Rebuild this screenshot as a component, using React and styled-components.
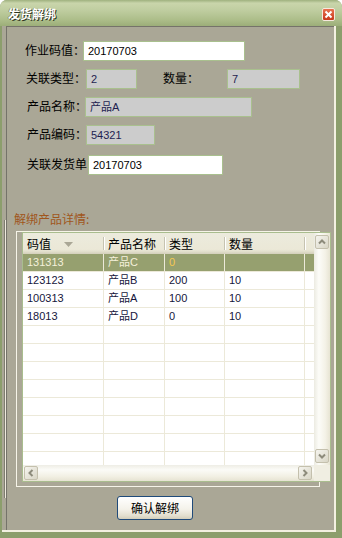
import React from "react";
import styled, { createGlobalStyle } from "styled-components";

const CJK = `"Noto Sans CJK SC", "Liberation Sans", sans-serif`;
const UI = `"Liberation Sans", "Noto Sans CJK SC", sans-serif`;

const Global = createGlobalStyle`
  html, body { margin: 0; padding: 0; background: #ffffff; }
  #root { width: 342px; height: 538px; }
  * { box-sizing: border-box; }
`;

const Window = styled.div`
  width: 342px;
  height: 538px;
  background: #8c9e6c;
  border-radius: 7px 7px 0 0;
  display: flex;
  flex-direction: column;
  overflow: hidden;
`;

const TitleBar = styled.div`
  height: 26px;
  flex: none;
  display: flex;
  align-items: center;
  padding: 2px 7px 0 8px;
  background: linear-gradient(
    to bottom,
    #9fb17e 0%,
    #c9d5ab 12%,
    #bfcda0 40%,
    #adbe8a 75%,
    #9cae79 100%
  );
`;

const Title = styled.div`
  font: 700 12px/14px ${CJK};
  color: #ffffff;
  text-shadow: 1px 1px 0 #2c3420, -1px 0 0 rgba(40, 50, 30, 0.35);
`;

const CloseBtn = styled.div`
  margin-left: auto;
  width: 13px;
  height: 13px;
  border: 1px solid #f6e8de;
  border-radius: 2px;
  background: linear-gradient(to bottom, #e8714f, #c8381b);
  display: flex;
  align-items: center;
  justify-content: center;
`;

const Frame = styled.div`
  flex: 1;
  margin: 0 6px 6px 2px;
  background: #aaa796;
  border-right: 2px solid #f3f0e1;
  border-bottom: 2px solid #f3f0e1;
  display: flex;
`;

const Gutter = styled.div`
  width: 4px;
  flex: none;
`;

const GroupEdge = styled.div`
  margin: 194px 0 0 2px;
  width: 2px;
  height: 278px;
  border-left: 1px solid #7f7d70;
  border-right: 1px solid #eeebdc;
`;

const Client = styled.div`
  flex: 1;
  border-left: 1px solid #75736a;
  border-top: 1px solid #75736a;
  display: flex;
  flex-direction: column;
  padding-top: 14px;
`;

const FieldRow = styled.div`
  display: flex;
  align-items: center;
  height: 20px;
  padding-left: ${(p) => p.$pl}px;
  margin-top: ${(p) => p.$mt || 0}px;
`;

const Label = styled.div`
  width: ${(p) => p.$w}px;
  margin-left: ${(p) => p.$ml || 0}px;
  flex: none;
  font: 12px/14px ${CJK};
  color: #000000;
  padding-bottom: 2px;
  white-space: nowrap;
`;

const TextBox = styled.div`
  width: ${(p) => p.$w}px;
  height: 20px;
  flex: none;
  border: 1px solid #a9c08e;
  background: ${(p) => (p.$ro ? "#cccccc" : "#ffffff")};
  font: 11px/18px ${UI};
  color: ${(p) => (p.$ro ? "#1e1e50" : "#000000")};
  padding-left: 4px;
  display: flex;
  align-items: center;
  white-space: nowrap;
`;

const GroupTitle = styled.div`
  margin-top: 37px;
  padding-left: 7px;
  height: 14px;
  font: 12px/14px ${CJK};
  color: #a0561c;
`;

const GridFrame = styled.div`
  margin: 5px 0 0 9px;
  width: 304px;
  height: 256px;
  border: 1px solid #f6f4e8;
  padding-left: 5px;
`;

const Grid = styled.div`
  width: 309px;
  height: 250px;
  border: 1px solid #a9bd8e;
  background: #ffffff;
  display: flex;
  flex-direction: column;
`;

const GridMain = styled.div`
  height: 232px;
  display: flex;
  flex: none;
`;

const GridTable = styled.div`
  width: 291px;
  height: 232px;
  overflow: hidden;
  flex: none;
`;

const COLS = "81px 61px 60px 80px 9px";

const HeaderRow = styled.div`
  display: grid;
  grid-template-columns: ${COLS};
  height: 21px;
  background: linear-gradient(
    to bottom,
    #ecebdd 0%,
    #ebe8d7 78%,
    #e2dfcc 88%,
    #d3cfba 100%
  );
`;

const HeaderCell = styled.div`
  position: relative;
  display: flex;
  align-items: center;
  padding-left: 4px;
  font: 12px/20px ${CJK};
  color: #000000;
  white-space: nowrap;
  &::after {
    content: "";
    display: ${(p) => (p.$sep ? "block" : "none")};
    position: absolute;
    right: 0;
    top: 4px;
    width: 1px;
    height: 13px;
    background: #c6c3b1;
    box-shadow: 1px 0 0 #ffffff;
  }
`;

const SortArrow = styled.svg`
  margin-left: 13px;
  margin-top: 1px;
`;

const DataRow = styled.div`
  display: grid;
  grid-template-columns: ${COLS};
  height: 18px;
  border-bottom: 1px solid #ece9d9;
  background: ${(p) => (p.$sel ? "#96a06f" : "#ffffff")};
`;

const Cell = styled.div`
  padding-left: 4px;
  border-right: ${(p) => (p.$last ? "none" : "1px solid #ece9d9")};
  font: 11px/17px ${UI};
  color: ${(p) => (p.$hl ? "#f5c94f" : p.$sel ? "#f4f0da" : "#16163c")};
  white-space: nowrap;
  overflow: hidden;
`;

const VScroll = styled.div`
  width: 16px;
  height: 232px;
  flex: none;
  display: flex;
  flex-direction: column;
  justify-content: space-between;
  padding: 2px 1px 2px 1px;
  background: linear-gradient(
    to right,
    #ecebe2 0%,
    #fcfcf8 30%,
    #f4f2e7 70%,
    #e7e4d3 100%
  );
`;

const HScrollRow = styled.div`
  display: flex;
  height: 16px;
  flex: none;
`;

const HScroll = styled.div`
  width: 291px;
  flex: none;
  display: flex;
  justify-content: space-between;
  padding: 1px 2px 1px 1px;
  background: linear-gradient(
    to bottom,
    #eeede5 0%,
    #fbfbf7 30%,
    #f2f0e4 70%,
    #e6e3d2 100%
  );
`;

const Corner = styled.div`
  flex: 1;
  background: #f0eee2;
`;

const ScrollBtn = styled.div`
  width: 14px;
  height: 14px;
  border: 1px solid #c4c0ad;
  border-radius: 2px;
  background: linear-gradient(135deg, #f5f4ee, #d9d6c6);
  display: flex;
  align-items: center;
  justify-content: center;
`;

const Button = styled.div`
  margin: 9px 0 0 110px;
  width: 76px;
  height: 24px;
  border: 1px solid #1f4a7a;
  border-radius: 3px;
  background: linear-gradient(
    to bottom,
    #ffffff 0%,
    #f4f2ea 55%,
    #e3dfcf 85%,
    #d3ceba 100%
  );
  display: flex;
  align-items: center;
  justify-content: center;
  font: 12px/14px ${CJK};
  color: #000000;
`;

const Chevron = ({ dir }) => {
  const pts = {
    up: "3,7.5 6,4.5 9,7.5",
    down: "3,4.5 6,7.5 9,4.5",
    left: "7.5,3 4.5,6 7.5,9",
    right: "4.5,3 7.5,6 4.5,9",
  }[dir];
  return (
    <svg width="12" height="12" viewBox="0 0 12 12">
      <polyline points={pts} fill="none" stroke="#8d8b7b" strokeWidth="2" />
    </svg>
  );
};

const rows = [
  { code: "131313", name: "产品C", type: "0", qty: "", sel: true },
  { code: "123123", name: "产品B", type: "200", qty: "10" },
  { code: "100313", name: "产品A", type: "100", qty: "10" },
  { code: "18013", name: "产品D", type: "0", qty: "10" },
];
const emptyRows = Array.from({ length: 8 });

export default function App() {
  return (
    <>
      <Global />
      <Window>
        <TitleBar>
          <Title>发货解绑</Title>
          <CloseBtn>
            <svg width="9" height="9" viewBox="0 0 9 9">
              <path d="M1.5 1.5 L7.5 7.5 M7.5 1.5 L1.5 7.5" stroke="#ffffff" strokeWidth="2" />
            </svg>
          </CloseBtn>
        </TitleBar>
        <Frame>
          <Gutter>
            <GroupEdge />
          </Gutter>
          <Client>
            <FieldRow $pl={18}>
              <Label $w={58}>作业码值：</Label>
              <TextBox $w={162}>20170703</TextBox>
            </FieldRow>
            <FieldRow $pl={19} $mt={8}>
              <Label $w={60}>关联类型：</Label>
              <TextBox $w={51} $ro>2</TextBox>
              <Label $w={64} $ml={26}>数量：</Label>
              <TextBox $w={73} $ro>7</TextBox>
            </FieldRow>
            <FieldRow $pl={20} $mt={8}>
              <Label $w={58}>产品名称：</Label>
              <TextBox $w={167} $ro>产品A</TextBox>
            </FieldRow>
            <FieldRow $pl={20} $mt={8}>
              <Label $w={59}>产品编码：</Label>
              <TextBox $w={69} $ro>54321</TextBox>
            </FieldRow>
            <FieldRow $pl={20} $mt={10}>
              <Label $w={61}>关联发货单</Label>
              <TextBox $w={135}>20170703</TextBox>
            </FieldRow>

            <GroupTitle>解绑产品详情:</GroupTitle>
            <GridFrame>
              <Grid>
                <GridMain>
                  <GridTable>
                    <HeaderRow>
                      <HeaderCell $sep>
                        码值
                        <SortArrow width="9" height="5" viewBox="0 0 9 5">
                          <polygon points="0,0 9,0 4.5,5" fill="#aaa796" />
                        </SortArrow>
                      </HeaderCell>
                      <HeaderCell $sep>产品名称</HeaderCell>
                      <HeaderCell $sep>类型</HeaderCell>
                      <HeaderCell $sep>数量</HeaderCell>
                      <HeaderCell />
                    </HeaderRow>
                    {rows.map((r) => (
                      <DataRow key={r.code} $sel={r.sel}>
                        <Cell $sel={r.sel}>{r.code}</Cell>
                        <Cell $sel={r.sel}>{r.name}</Cell>
                        <Cell $sel={r.sel} $hl={r.sel}>{r.type}</Cell>
                        <Cell $sel={r.sel}>{r.qty}</Cell>
                        <Cell $sel={r.sel} $last />
                      </DataRow>
                    ))}
                    {emptyRows.map((_, i) => (
                      <DataRow key={"e" + i}>
                        <Cell />
                        <Cell />
                        <Cell />
                        <Cell />
                        <Cell $last />
                      </DataRow>
                    ))}
                  </GridTable>
                  <VScroll>
                    <ScrollBtn>
                      <Chevron dir="up" />
                    </ScrollBtn>
                    <ScrollBtn>
                      <Chevron dir="down" />
                    </ScrollBtn>
                  </VScroll>
                </GridMain>
                <HScrollRow>
                  <HScroll>
                    <ScrollBtn>
                      <Chevron dir="left" />
                    </ScrollBtn>
                    <ScrollBtn>
                      <Chevron dir="right" />
                    </ScrollBtn>
                  </HScroll>
                  <Corner />
                </HScrollRow>
              </Grid>
            </GridFrame>
            <Button>确认解绑</Button>
          </Client>
        </Frame>
      </Window>
    </>
  );
}
